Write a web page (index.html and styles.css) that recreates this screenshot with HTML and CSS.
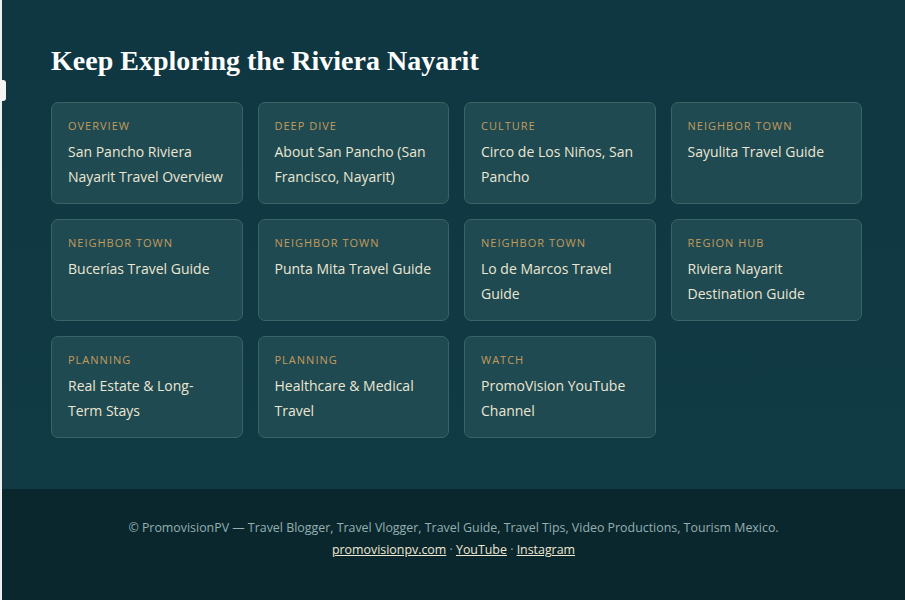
FILE: index.html
```html
<!DOCTYPE html>
<html lang="en">
<head>
  <meta charset="UTF-8">
  <title>Keep Exploring the Riviera Nayarit</title>
  <link rel="stylesheet" href="styles.css">
</head>
<body>
<div class="page">
  <span class="edge-tab"></span>
  <section class="explore">
    <h2>Keep Exploring the Riviera Nayarit</h2>
    <div class="cards">
      <a class="card" href="#"><span class="tag">Overview</span><span class="title">San Pancho Riviera Nayarit Travel Overview</span></a>
      <a class="card" href="#"><span class="tag">Deep Dive</span><span class="title">About San Pancho (San Francisco, Nayarit)</span></a>
      <a class="card" href="#"><span class="tag">Culture</span><span class="title">Circo de Los Niños, San Pancho</span></a>
      <a class="card" href="#"><span class="tag">Neighbor Town</span><span class="title">Sayulita Travel Guide</span></a>
      <a class="card" href="#"><span class="tag">Neighbor Town</span><span class="title">Bucerías Travel Guide</span></a>
      <a class="card" href="#"><span class="tag">Neighbor Town</span><span class="title">Punta Mita Travel Guide</span></a>
      <a class="card" href="#"><span class="tag">Neighbor Town</span><span class="title">Lo de Marcos Travel Guide</span></a>
      <a class="card" href="#"><span class="tag">Region Hub</span><span class="title">Riviera Nayarit Destination Guide</span></a>
      <a class="card" href="#"><span class="tag">Planning</span><span class="title">Real Estate &amp; Long-Term Stays</span></a>
      <a class="card" href="#"><span class="tag">Planning</span><span class="title">Healthcare &amp; Medical Travel</span></a>
      <a class="card" href="#"><span class="tag">Watch</span><span class="title">PromoVision YouTube Channel</span></a>
    </div>
  </section>
  <footer class="site-footer">
    <p>© PromovisionPV — Travel Blogger, Travel Vlogger, Travel Guide, Travel Tips, Video Productions, Tourism Mexico.</p>
    <p><a href="#">promovisionpv.com</a> · <a href="#">YouTube</a> · <a href="#">Instagram</a></p>
  </footer>
</div>
</body>
</html>
```
FILE: styles.css
```css
body {
  margin: 0;
  background-color: #0b272e;
  font-family: "Open Sans", "Noto Sans", sans-serif;
}
.page {
  position: relative;
  border-left: 2px solid #eef0ee;
  min-height: 600px;
  background-color: #0b272e;
}
.edge-tab {
  position: absolute;
  left: -2px;
  top: 80px;
  width: 6px;
  height: 21px;
  background-color: #f4f5f3;
  border-radius: 0 3px 3px 0;
}
.explore {
  background: linear-gradient(180deg, #0f3742 0%, #103a44 100%);
  padding: 45px 43px 51px 49px;
}
.explore h2 {
  margin: 0 0 25px;
  font-family: "Liberation Serif", Georgia, serif;
  font-size: 28px;
  line-height: 32px;
  font-weight: bold;
  color: #ffffff;
}
.cards {
  display: grid;
  grid-template-columns: repeat(4, 1fr);
  gap: 15px;
}
.card {
  display: block;
  min-height: 102px;
  padding: 16px 15px 10px 16px;
  background-color: #1f4a51;
  border: 1px solid #3a6366;
  border-radius: 7px;
  text-decoration: none;
  box-sizing: border-box;
}
.tag {
  display: block;
  font-size: 11px;
  line-height: 14px;
  letter-spacing: 1px;
  text-transform: uppercase;
  color: #c49b5c;
  margin-bottom: 6px;
}
.title {
  display: block;
  font-size: 14px;
  line-height: 25px;
  color: #ebe6d3;
}
.site-footer {
  padding: 28px 20px 30px;
  text-align: center;
  font-size: 12.4px;
  line-height: 22px;
  color: #93afb0;
}
.site-footer p {
  margin: 0;
}
.site-footer a {
  color: #efe8d2;
}
```
